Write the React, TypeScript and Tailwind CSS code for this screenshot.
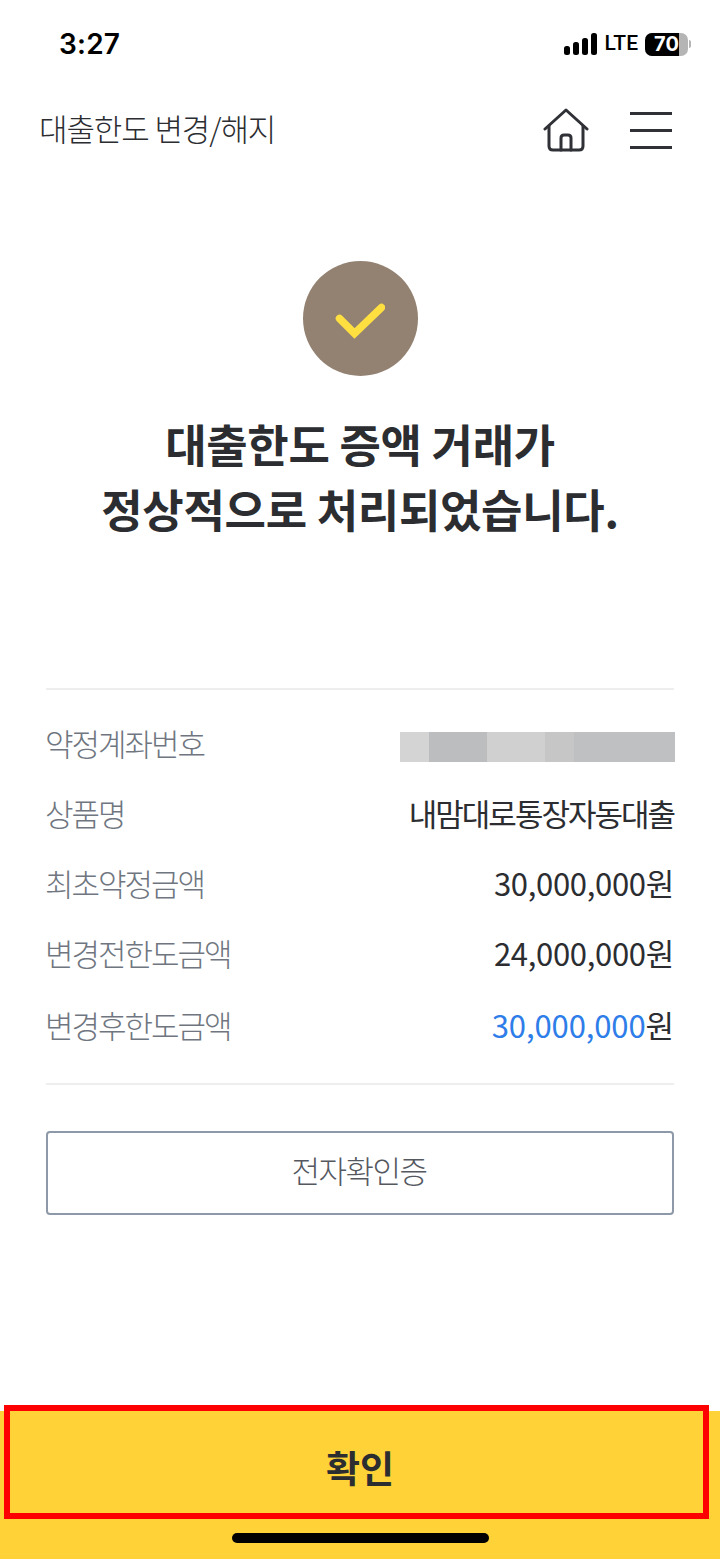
const KR = "font-['Noto_Sans_CJK_KR',sans-serif]";

function Row({ label, children, h, track }: { label: string; children: React.ReactNode; h: string; track: string }) {
  return (
    <div className={`flex items-center justify-between ${h}`}>
      <span className="-ml-px text-[31px] font-light tracking-[-2px] text-[#6f7680]">{label}</span>
      <span className={`text-[31px] font-normal text-[#2b2d31] ${track}`}>{children}</span>
    </div>
  );
}

export default function App() {
  return (
    <div className={`relative flex h-[1559px] w-[720px] flex-col overflow-hidden bg-white ${KR}`}>
      {/* status bar */}
      <div className="flex h-[88px] items-center justify-between pl-[59px] pr-[29px] font-['Inter',sans-serif]">
        <span className="text-[28px] font-semibold tracking-[0.2px] text-black">3:27</span>
        <div className="flex items-center">
          <svg width="34" height="22" viewBox="0 0 34 22" fill="#000" className="mr-[7px]">
            <rect x="0" y="13" width="6" height="9" rx="2.5" />
            <rect x="9" y="9" width="6" height="13" rx="2.5" />
            <rect x="18" y="5" width="6" height="17" rx="2.5" />
            <rect x="27" y="0" width="6" height="22" rx="2.5" />
          </svg>
          <span className="font-['Roboto',sans-serif] text-[21px] font-medium text-black">LTE</span>
          <div className="relative ml-[7px] flex h-[23px] w-[43px] items-center justify-center overflow-hidden rounded-[7px] bg-[#b5b5b5]">
            <div className="absolute inset-y-0 left-0 w-[34px] bg-black" />
            <span className="relative font-['Inter',sans-serif] text-[20px] font-bold leading-none text-white">70</span>
          </div>
          <div className="ml-[1px] h-[8px] w-[2px] rounded-r bg-[#b5b5b5]" />
        </div>
      </div>

      {/* header */}
      <div className="flex h-[84px] items-center justify-between pl-[39px] pr-[48px]">
        <span className="mb-[3px] text-[31px] font-light tracking-[-1.1px] text-[#2b2d31]">대출한도 변경/해지</span>
        <div className="flex items-center gap-[41px]">
          <svg width="46" height="44" viewBox="0 0 46 44" fill="none" stroke="#2f3136" strokeWidth="3" strokeLinecap="round" strokeLinejoin="round">
            <path d="M2 21 L23 2 L44 21" />
            <path d="M6 18 V38 Q6 42 10 42 H36 Q40 42 40 38 V18" />
            <path d="M18 42 V30 Q18 27 21 27 H25 Q28 27 28 30 V42" />
          </svg>
          <div className="flex w-[42px] flex-col gap-[14px]">
            <div className="h-[3px] bg-[#2f3136]" />
            <div className="h-[3px] bg-[#2f3136]" />
            <div className="h-[3px] bg-[#2f3136]" />
          </div>
        </div>
      </div>

      {/* result */}
      <div className="mt-[89px] flex flex-col items-center">
        <div className="flex h-[115px] w-[115px] items-center justify-center rounded-full bg-[#938272]">
          <svg width="50" height="44" viewBox="0 0 50 44" fill="none" stroke="#ffe040" strokeWidth="7.500" strokeLinecap="round">
            <path d="M4.500 21.500 L19.500 36.500 L46.500 10.500" />
          </svg>
        </div>
        <h1 className="mt-[35px] text-center text-[45px] font-bold leading-[65px] tracking-[-0.3px] text-[#2b2d31]">
          대출한도 증액 거래가
          <br />
          정상적으로 처리되었습니다.
        </h1>
      </div>

      {/* details */}
      <div className="mx-[46px] mt-[147px] flex flex-col border-y-2 border-[#eeeeee]">
        <div className="pt-[18px] pb-[22px]">
          <div className="flex h-[70px] items-center justify-between">
            <span className="-ml-px text-[31px] font-light tracking-[-2px] text-[#6f7680]">약정계좌번호</span>
            <div className="-mr-px mt-[8px] flex h-[30px] w-[275px]">
              <div className="w-[29px] bg-[#d4d4d4]" />
              <div className="w-[58px] bg-[#bcbdbe]" />
              <div className="w-[58px] bg-[#d0d0d0]" />
              <div className="w-[29px] bg-[#c6c6c6]" />
              <div className="flex-1 bg-[#bfc0c1]" />
            </div>
          </div>
          <Row label="상품명" h="h-[71px]" track="tracking-[-2px]">내맘대로통장자동대출</Row>
          <Row label="최초약정금액" h="h-[68px]" track="tracking-[-0.3px]">30,000,000원</Row>
          <Row label="변경전한도금액" h="h-[73px]" track="tracking-[-0.3px]">24,000,000원</Row>
          <Row label="변경후한도금액" h="h-[71px]" track="tracking-[-0.1px]">
            <span className="text-[#2e7de9]">30,000,000</span>원
          </Row>
        </div>
      </div>

      <div className="mx-[46px] mt-[46px] flex h-[84px] items-center justify-center rounded-[4px] border-2 border-[#8d99a8] pr-[2px] pb-[5px] text-[31px] font-light tracking-[-1.5px] text-[#55595f]">
        전자확인증
      </div>

      {/* footer */}
      <div className="mt-auto flex h-[148px] flex-col items-center bg-[#ffd237]">
        <div className="flex h-[107px] items-center justify-center pt-[6px] text-[37px] font-semibold text-[#2b2d31]">확인</div>
        <div className="mt-[15px] h-[10px] w-[257px] rounded-full bg-black" />
      </div>

      {/* annotation overlay */}
      <div className="absolute left-[4px] top-[1405px] h-[114px] w-[705px] border-[6px] border-[#ff0000]" />
    </div>
  );
}
